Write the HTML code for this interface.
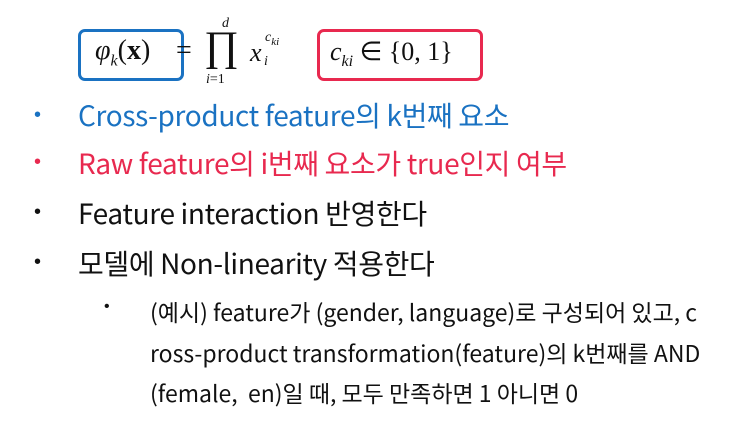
<!DOCTYPE html>
<html><head><meta charset="utf-8"><style>
body{margin:0;width:747px;height:440px;background:#fff;position:relative;overflow:hidden;font-family:"Noto Sans CJK KR","Liberation Sans",sans-serif;color:#111}
.box{position:absolute;border:3px solid;border-radius:7px;box-sizing:border-box}
.m{position:absolute;font-family:"Liberation Serif",serif;font-style:italic;color:#111;white-space:nowrap}
.l{position:absolute;font-size:28px;white-space:nowrap;line-height:34px;letter-spacing:-0.35px}
.b{position:absolute;font-size:20px;font-family:"Liberation Sans",sans-serif}
.s{position:absolute;font-size:23px;white-space:nowrap;line-height:30px;left:150px}
</style></head><body>
<div class="box" style="left:78px;top:29px;width:106px;height:52px;border-color:#1a72c2"></div>
<div class="box" style="left:317px;top:29px;width:166px;height:52px;border-color:#e8294f"></div>
<div class="m" style="left:95px;top:35px;font-size:28px">φ<sub style="font-size:16px">k</sub><span style="font-style:normal">(<b>x</b>)</span></div>
<div class="m" style="left:176px;top:35px;font-size:28px;font-style:normal">=</div>
<div class="m" style="left:222px;top:16px;font-size:14px">d</div>
<div class="m" style="left:204px;top:26px;font-size:42px;font-style:normal;line-height:42px">∏</div>
<div class="m" style="left:206px;top:72px;font-size:14px">i<span style="font-style:normal">=1</span></div>
<div class="m" style="left:250px;top:38px;font-size:26px">x</div>
<div class="m" style="left:265px;top:30px;font-size:14px">c<sub style="font-size:11px">ki</sub></div>
<div class="m" style="left:264px;top:54px;font-size:14px">i</div>
<div class="m" style="left:330px;top:37px;font-size:26px">c<sub style="font-size:16px">ki</sub><span style="font-style:normal"> ∈ {0, 1}</span></div>

<div class="b" style="left:34px;top:104px;color:#1a72c2">•</div>
<div class="l" style="left:78px;top:98px;color:#1a72c2">Cross-product feature의 k번째 요소</div>
<div class="b" style="left:34px;top:151px;color:#e8294f">•</div>
<div class="l" style="left:78px;top:146px;color:#e8294f">Raw feature의 i번째 요소가 true인지 여부</div>
<div class="b" style="left:34px;top:201px">•</div>
<div class="l" style="left:78px;top:196px">Feature interaction 반영한다</div>
<div class="b" style="left:34px;top:251px">•</div>
<div class="l" style="left:78px;top:246px">모델에 Non-linearity 적용한다</div>
<div class="b" style="left:104px;top:298px;font-size:16px">•</div>
<div class="s" style="top:296px">(예시) feature가 (gender, language)로 구성되어 있고, c</div>
<div class="s" style="top:337px">ross-product transformation(feature)의 k번째를 AND</div>
<div class="s" style="top:377px">(female,&nbsp; en)일 때, 모두 만족하면 1 아니면 0</div>
</body></html>
